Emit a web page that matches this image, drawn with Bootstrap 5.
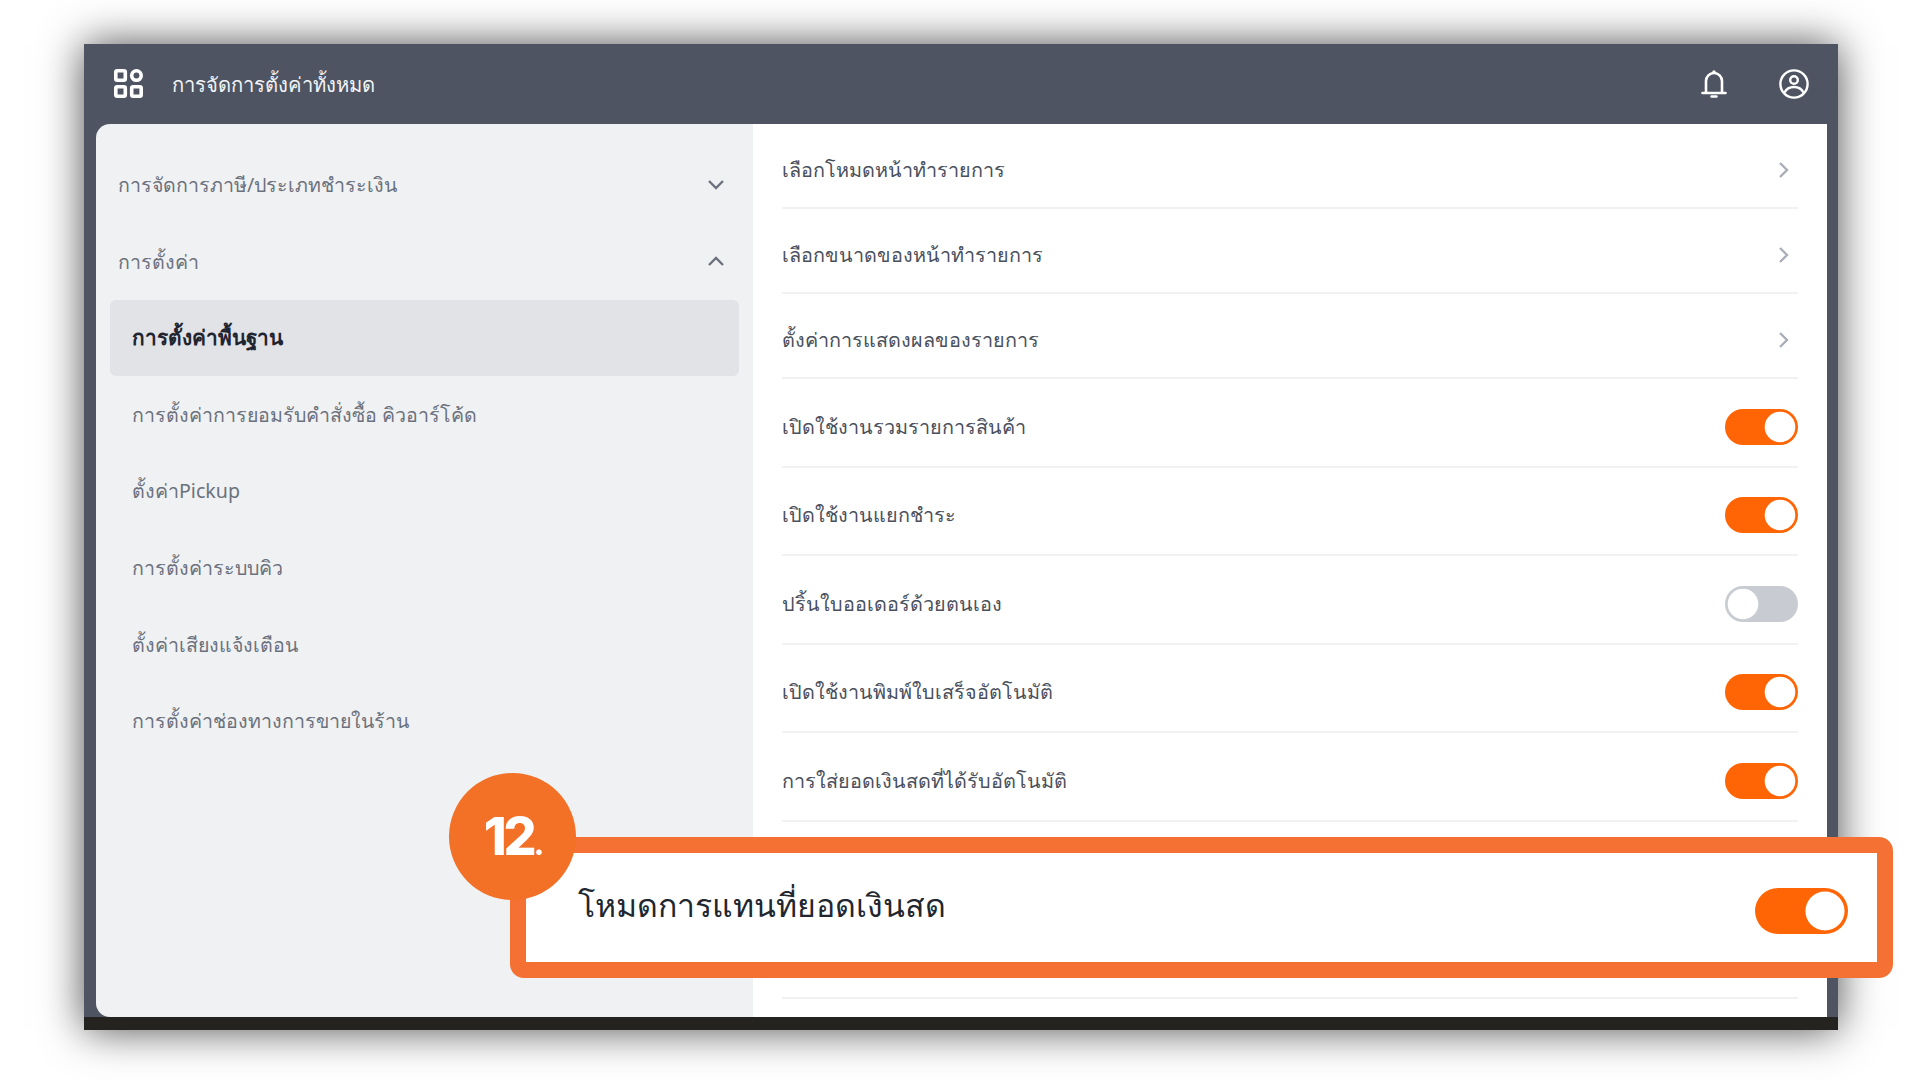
<!DOCTYPE html>
<html lang="th">
<head>
    <meta charset="UTF-8">
    <meta name="viewport" content="width=device-width, initial-scale=1.0">
    <title>การจัดการตั้งค่าทั้งหมด</title>
    <link href="https://cdn.jsdelivr.net/npm/bootstrap@5.3.2/dist/css/bootstrap.min.css" rel="stylesheet">
    <script src="https://cdn.jsdelivr.net/npm/bootstrap@5.3.2/dist/js/bootstrap.bundle.min.js"></script>
    <style>
        body {
            font-family: "Noto Sans", "Open Sans", "DejaVu Sans", sans-serif;
            background-color: #fff;
            height: 1080px;
            overflow: hidden;
            padding: 44px 82px 0 84px;
            position: relative;
        }
        .app-window {
            width: 1754px;
            height: 986px;
            background-color: #4e5461;
            box-shadow: 0 0 40px rgba(0, 0, 0, .7);
        }
        .top-bar {
            height: 80px;
            padding: 0 29px 0 30px;
            color: #fff;
        }
        .top-title {
            font-size: 20.2px;
            margin-left: 29px;
            color: #f2f3f5;
        }
        .top-icons { gap: 52px; }
        .app-body {
            height: 893px;
            padding: 0 11px 0 12px;
        }
        .side-panel {
            width: 657px;
            background-color: #f0f1f3;
            border-radius: 14px 0 0 14px;
            padding: 22.500px 14px 0 14px;
            flex-shrink: 0;
        }
        .side-head, .side-item {
            height: 76.6px;
            font-size: 19.6px;
            color: #6c727d;
        }
        .side-head { padding: 0 14px 0 8px; }
        .side-item { padding: 0 22px; border-radius: 6px; }
        .side-item.picked {
            background-color: #e1e3e7;
            color: #1f2530;
            font-size: 20.8px;
            font-weight: 700;
        }
        .rows-panel {
            background-color: #fff;
            padding: 0 29px;
            overflow: hidden;
        }
        .set-row {
            height: 88.5px;
            padding-top: 9px;
            border-bottom: 2px solid #f0f1f3;
            font-size: 19.8px;
            color: #4a505c;
            flex-shrink: 0;
        }
        .set-row.nav-row { height: 85px; }
        .arrow-ico { margin-right: 9px; }
        .foot-strip {
            height: 13px;
            background-color: #24231f;
        }
        .form-switch .switch-ui {
            width: 73px;
            height: 36px;
            margin: 0;
            border: 0;
            float: none;
            background-color: #c8ccd2;
            background-image: url("data:image/svg+xml,%3csvg xmlns='http://www.w3.org/2000/svg' viewBox='-4 -4 8 8'%3e%3ccircle r='3.4' fill='%23fff'/%3e%3c/svg%3e");
            box-shadow: none;
        }
        .form-switch .switch-ui:checked {
            background-color: #ff6505;
            background-position: right center;
        }
        .form-switch .switch-ui.big {
            width: 93px;
            height: 46px;
            margin-top: 6px;
        }
        .callout-box {
            position: absolute;
            left: 510px;
            top: 837px;
            width: 1383px;
            height: 141px;
            background-color: #fff;
            border: 16px solid #f47133;
            border-radius: 14px;
            padding: 0 29px 0 52px;
        }
        .callout-text {
            font-size: 32px;
            color: #22262e;
            margin-bottom: 6px;
        }
        .callout-num {
            position: absolute;
            left: 449px;
            top: 773px;
            width: 127px;
            height: 127px;
            border-radius: 50%;
            background-color: #f37027;
            color: #fff;
            font-family: "Inter", "Noto Sans", sans-serif;
            font-size: 52px;
            font-weight: 800;
            letter-spacing: -3px;
        }
        .num-dot { font-size: 30px; align-self: flex-end; line-height: 1; }
    </style>
</head>
<body>
    <div class="app-window d-flex flex-column">
        <header class="top-bar d-flex align-items-center justify-content-between">
            <div class="d-flex align-items-center">
                <svg width="29" height="29" viewBox="0 0 29 29" fill="none" stroke="#fff" stroke-width="3.6">
                    <rect x="1.8" y="1.8" width="9.500" height="9.500" rx="1.500"/>
                    <rect x="17.700" y="1.8" width="9.500" height="9.500" rx="4.750"/>
                    <rect x="1.8" y="17.700" width="9.500" height="9.500" rx="1.500"/>
                    <rect x="17.700" y="17.700" width="9.500" height="9.500" rx="1.500"/>
                </svg>
                <span class="top-title">การจัดการตั้งค่าทั้งหมด</span>
            </div>
            <div class="top-icons d-flex align-items-center">
                <svg width="26" height="30" viewBox="0 0 26 30" fill="none" stroke="#fff" stroke-width="2.6" stroke-linejoin="round">
                    <path d="M5 23V12a8 8 0 0 1 16 0v11"/>
                    <path d="M1.5 24h23" stroke-linecap="round"/>
                    <circle cx="13" cy="3" r="1" fill="#fff" stroke-width="1.5"/>
                    <path d="M10.5 27.5h5" stroke-width="2.4" stroke-linecap="round"/>
                </svg>
                <svg width="30" height="30" viewBox="0 0 30 30" fill="none" stroke="#fff" stroke-width="2.4">
                    <circle cx="15" cy="15" r="13.6"/>
                    <circle cx="15" cy="11" r="3.8"/>
                    <path d="M5.5 23.5c2-4 5.500-5.500 9.500-5.500s7.500 1.500 9.500 5.500"/>
                </svg>
            </div>
        </header>

        <div class="app-body d-flex">
            <aside class="side-panel">
                <div class="side-head d-flex align-items-center justify-content-between">
                    <span>การจัดการภาษี/ประเภทชำระเงิน</span>
                    <svg width="18" height="11" viewBox="0 0 18 11" fill="none" stroke="#6c727d" stroke-width="2.4"><path d="M2 2l7 7 7-7"/></svg>
                </div>
                <div class="side-head d-flex align-items-center justify-content-between">
                    <span>การตั้งค่า</span>
                    <svg width="18" height="11" viewBox="0 0 18 11" fill="none" stroke="#6c727d" stroke-width="2.4"><path d="M2 9l7-7 7 7"/></svg>
                </div>
                <div class="side-item picked d-flex align-items-center">การตั้งค่าพื้นฐาน</div>
                <div class="side-item d-flex align-items-center">การตั้งค่าการยอมรับคำสั่งซื้อ คิวอาร์โค้ด</div>
                <div class="side-item d-flex align-items-center">ตั้งค่าPickup</div>
                <div class="side-item d-flex align-items-center">การตั้งค่าระบบคิว</div>
                <div class="side-item d-flex align-items-center">ตั้งค่าเสียงแจ้งเตือน</div>
                <div class="side-item d-flex align-items-center">การตั้งค่าช่องทางการขายในร้าน</div>
            </aside>

            <main class="rows-panel flex-grow-1 d-flex flex-column">
                <div class="set-row nav-row d-flex align-items-center justify-content-between">
                    <span>เลือกโหมดหน้าทำรายการ</span>
                    <svg class="arrow-ico" width="11" height="18" viewBox="0 0 11 18" fill="none" stroke="#a9aeb8" stroke-width="2.400"><path d="M2 2l7 7-7 7"/></svg>
                </div>
                <div class="set-row nav-row d-flex align-items-center justify-content-between">
                    <span>เลือกขนาดของหน้าทำรายการ</span>
                    <svg class="arrow-ico" width="11" height="18" viewBox="0 0 11 18" fill="none" stroke="#a9aeb8" stroke-width="2.400"><path d="M2 2l7 7-7 7"/></svg>
                </div>
                <div class="set-row nav-row d-flex align-items-center justify-content-between">
                    <span>ตั้งค่าการแสดงผลของรายการ</span>
                    <svg class="arrow-ico" width="11" height="18" viewBox="0 0 11 18" fill="none" stroke="#a9aeb8" stroke-width="2.400"><path d="M2 2l7 7-7 7"/></svg>
                </div>
                <div class="set-row d-flex align-items-center justify-content-between">
                    <span>เปิดใช้งานรวมรายการสินค้า</span>
                    <div class="form-check form-switch p-0 m-0 d-flex"><input class="form-check-input switch-ui" type="checkbox" checked></div>
                </div>
                <div class="set-row d-flex align-items-center justify-content-between">
                    <span>เปิดใช้งานแยกชำระ</span>
                    <div class="form-check form-switch p-0 m-0 d-flex"><input class="form-check-input switch-ui" type="checkbox" checked></div>
                </div>
                <div class="set-row d-flex align-items-center justify-content-between">
                    <span>ปริ้นใบออเดอร์ด้วยตนเอง</span>
                    <div class="form-check form-switch p-0 m-0 d-flex"><input class="form-check-input switch-ui" type="checkbox"></div>
                </div>
                <div class="set-row d-flex align-items-center justify-content-between">
                    <span>เปิดใช้งานพิมพ์ใบเสร็จอัตโนมัติ</span>
                    <div class="form-check form-switch p-0 m-0 d-flex"><input class="form-check-input switch-ui" type="checkbox" checked></div>
                </div>
                <div class="set-row d-flex align-items-center justify-content-between">
                    <span>การใส่ยอดเงินสดที่ได้รับอัตโนมัติ</span>
                    <div class="form-check form-switch p-0 m-0 d-flex"><input class="form-check-input switch-ui" type="checkbox" checked></div>
                </div>
                <div class="set-row"></div>
                <div class="set-row"></div>
            </main>
        </div>
        <div class="foot-strip"></div>
    </div>

    <!-- callout over the window -->
    <div class="callout-box d-flex align-items-center justify-content-between">
        <span class="callout-text">โหมดการแทนที่ยอดเงินสด</span>
        <div class="form-check form-switch p-0 m-0 d-flex"><input class="form-check-input switch-ui big" type="checkbox" checked></div>
    </div>
    <div class="callout-num d-flex align-items-center justify-content-center"><span>12<span class="num-dot">.</span></span></div>
</body>
</html>
